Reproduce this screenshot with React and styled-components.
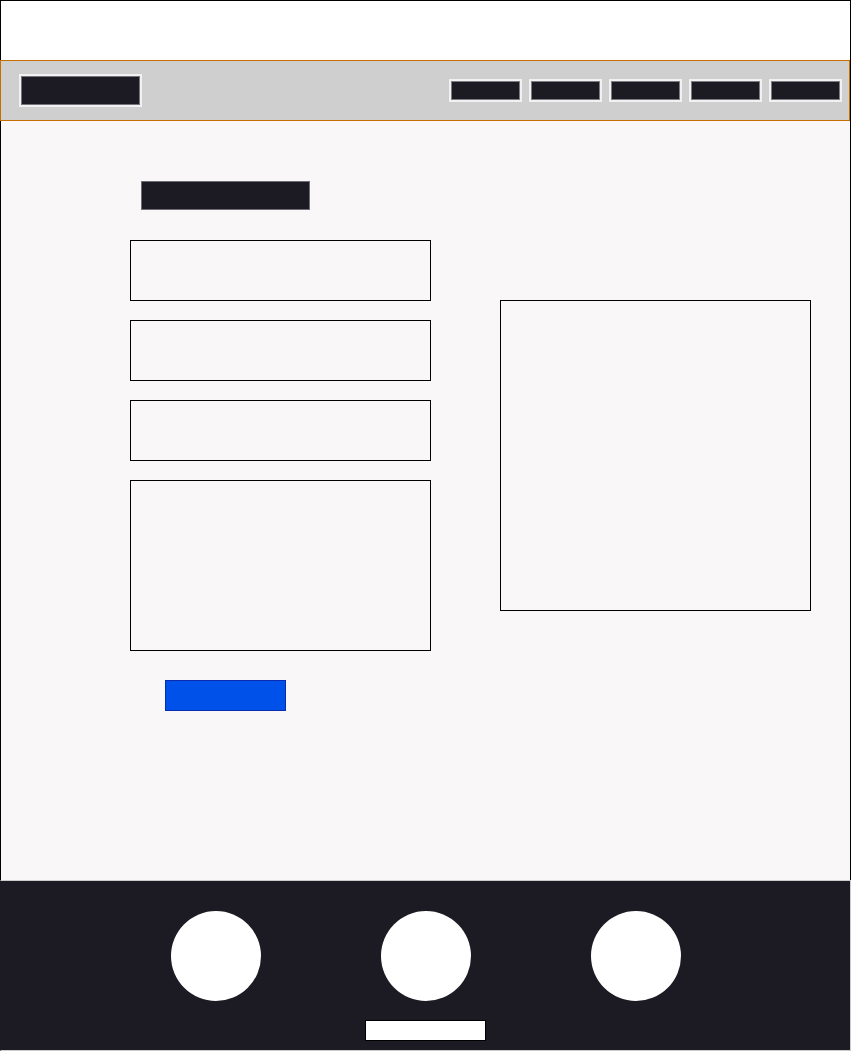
import React from "react";
import styled, { createGlobalStyle } from "styled-components";

const Global = createGlobalStyle`
  html, body { margin: 0; padding: 0; background: #ffffff; }
  body { font-family: "Liberation Sans", Arial, sans-serif; }
  * { box-sizing: border-box; }
`;

const Page = styled.div`
  width: 851px;
  display: flex;
  flex-direction: column;
`;

const TopStrip = styled.div`
  height: 60px;
  border: 1px solid #000;
  border-bottom: none;
  background: #ffffff;
`;

const HeaderRow = styled.div`
  display: flex;
  border-right: 1px solid #000;
`;

const Header = styled.header`
  width: 850px;
  height: 61px;
  background: #cfcfcf;
  border: 1px solid #c46f00;
  display: flex;
  align-items: center;
  justify-content: space-between;
  padding: 0 9px 0 20px;
`;

const Logo = styled.div`
  width: 119px;
  height: 29px;
  background: #1c1a22;
  border: 1px solid #75737b;
  box-shadow: 0 0 0 2px #f1f1f1;
`;

const Nav = styled.nav`
  display: flex;
  gap: 11px;
`;

const NavItem = styled.div`
  width: 69px;
  height: 19px;
  background: #1c1a22;
  border: 1px solid #7c7b82;
  box-shadow: 0 0 0 2px #f1f1f1;
`;

const Main = styled.main`
  height: 759px;
  background: #f9f7f8;
  border-left: 1px solid #000;
  border-right: 1px solid #000;
  display: flex;
  align-items: flex-start;
  padding: 60px 0 0 129px;
  gap: 69px;
`;

const FormColumn = styled.div`
  width: 301px;
  display: flex;
  flex-direction: column;
  align-items: flex-start;
`;

const Title = styled.div`
  width: 169px;
  height: 29px;
  margin: 0 0 30px 11px;
  background: #1c1a22;
  border: 1px solid #6e6c74;
`;

const Field = styled.div`
  width: 301px;
  height: ${(p) => (p.$tall ? 171 : 61)}px;
  border: 1px solid #000;
  background: #f9f7f8;
  margin-bottom: ${(p) => (p.$last ? 29 : 19)}px;
`;

const Submit = styled.button`
  width: 121px;
  height: 31px;
  margin-left: 35px;
  padding: 0;
  background: #0050ea;
  border: 1px solid #0a2cb0;
`;

const Panel = styled.div`
  width: 311px;
  height: 311px;
  margin-top: 119px;
  border: 1px solid #000;
  background: #f9f7f8;
`;

const Footer = styled.footer`
  height: 171px;
  background: #1c1a22;
  border-top: 1px solid #cccccc;
  border-right: 1px solid #cccccc;
  border-bottom: 1px solid #cccccc;
  border-left: 1px solid #1c1a22;
  display: flex;
  flex-direction: column;
  align-items: center;
  padding-top: 30px;
`;

const Circles = styled.div`
  display: flex;
  gap: 120px;
  margin-bottom: 19px;
`;

const Circle = styled.div`
  width: 90px;
  height: 90px;
  border-radius: 50%;
  background: #ffffff;
`;

const FooterBar = styled.div`
  width: 121px;
  height: 21px;
  background: #ffffff;
  border: 1px solid #000;
`;

export default function App() {
  return (
    <>
      <Global />
      <Page>
        <TopStrip />
        <HeaderRow>
          <Header>
            <Logo />
            <Nav>
              {[0, 1, 2, 3, 4].map((i) => (
                <NavItem key={i} />
              ))}
            </Nav>
          </Header>
        </HeaderRow>
        <Main>
          <FormColumn>
            <Title />
            <Field />
            <Field />
            <Field />
            <Field $tall $last />
            <Submit type="button" />
          </FormColumn>
          <Panel />
        </Main>
        <Footer>
          <Circles>
            <Circle />
            <Circle />
            <Circle />
          </Circles>
          <FooterBar />
        </Footer>
      </Page>
    </>
  );
}
